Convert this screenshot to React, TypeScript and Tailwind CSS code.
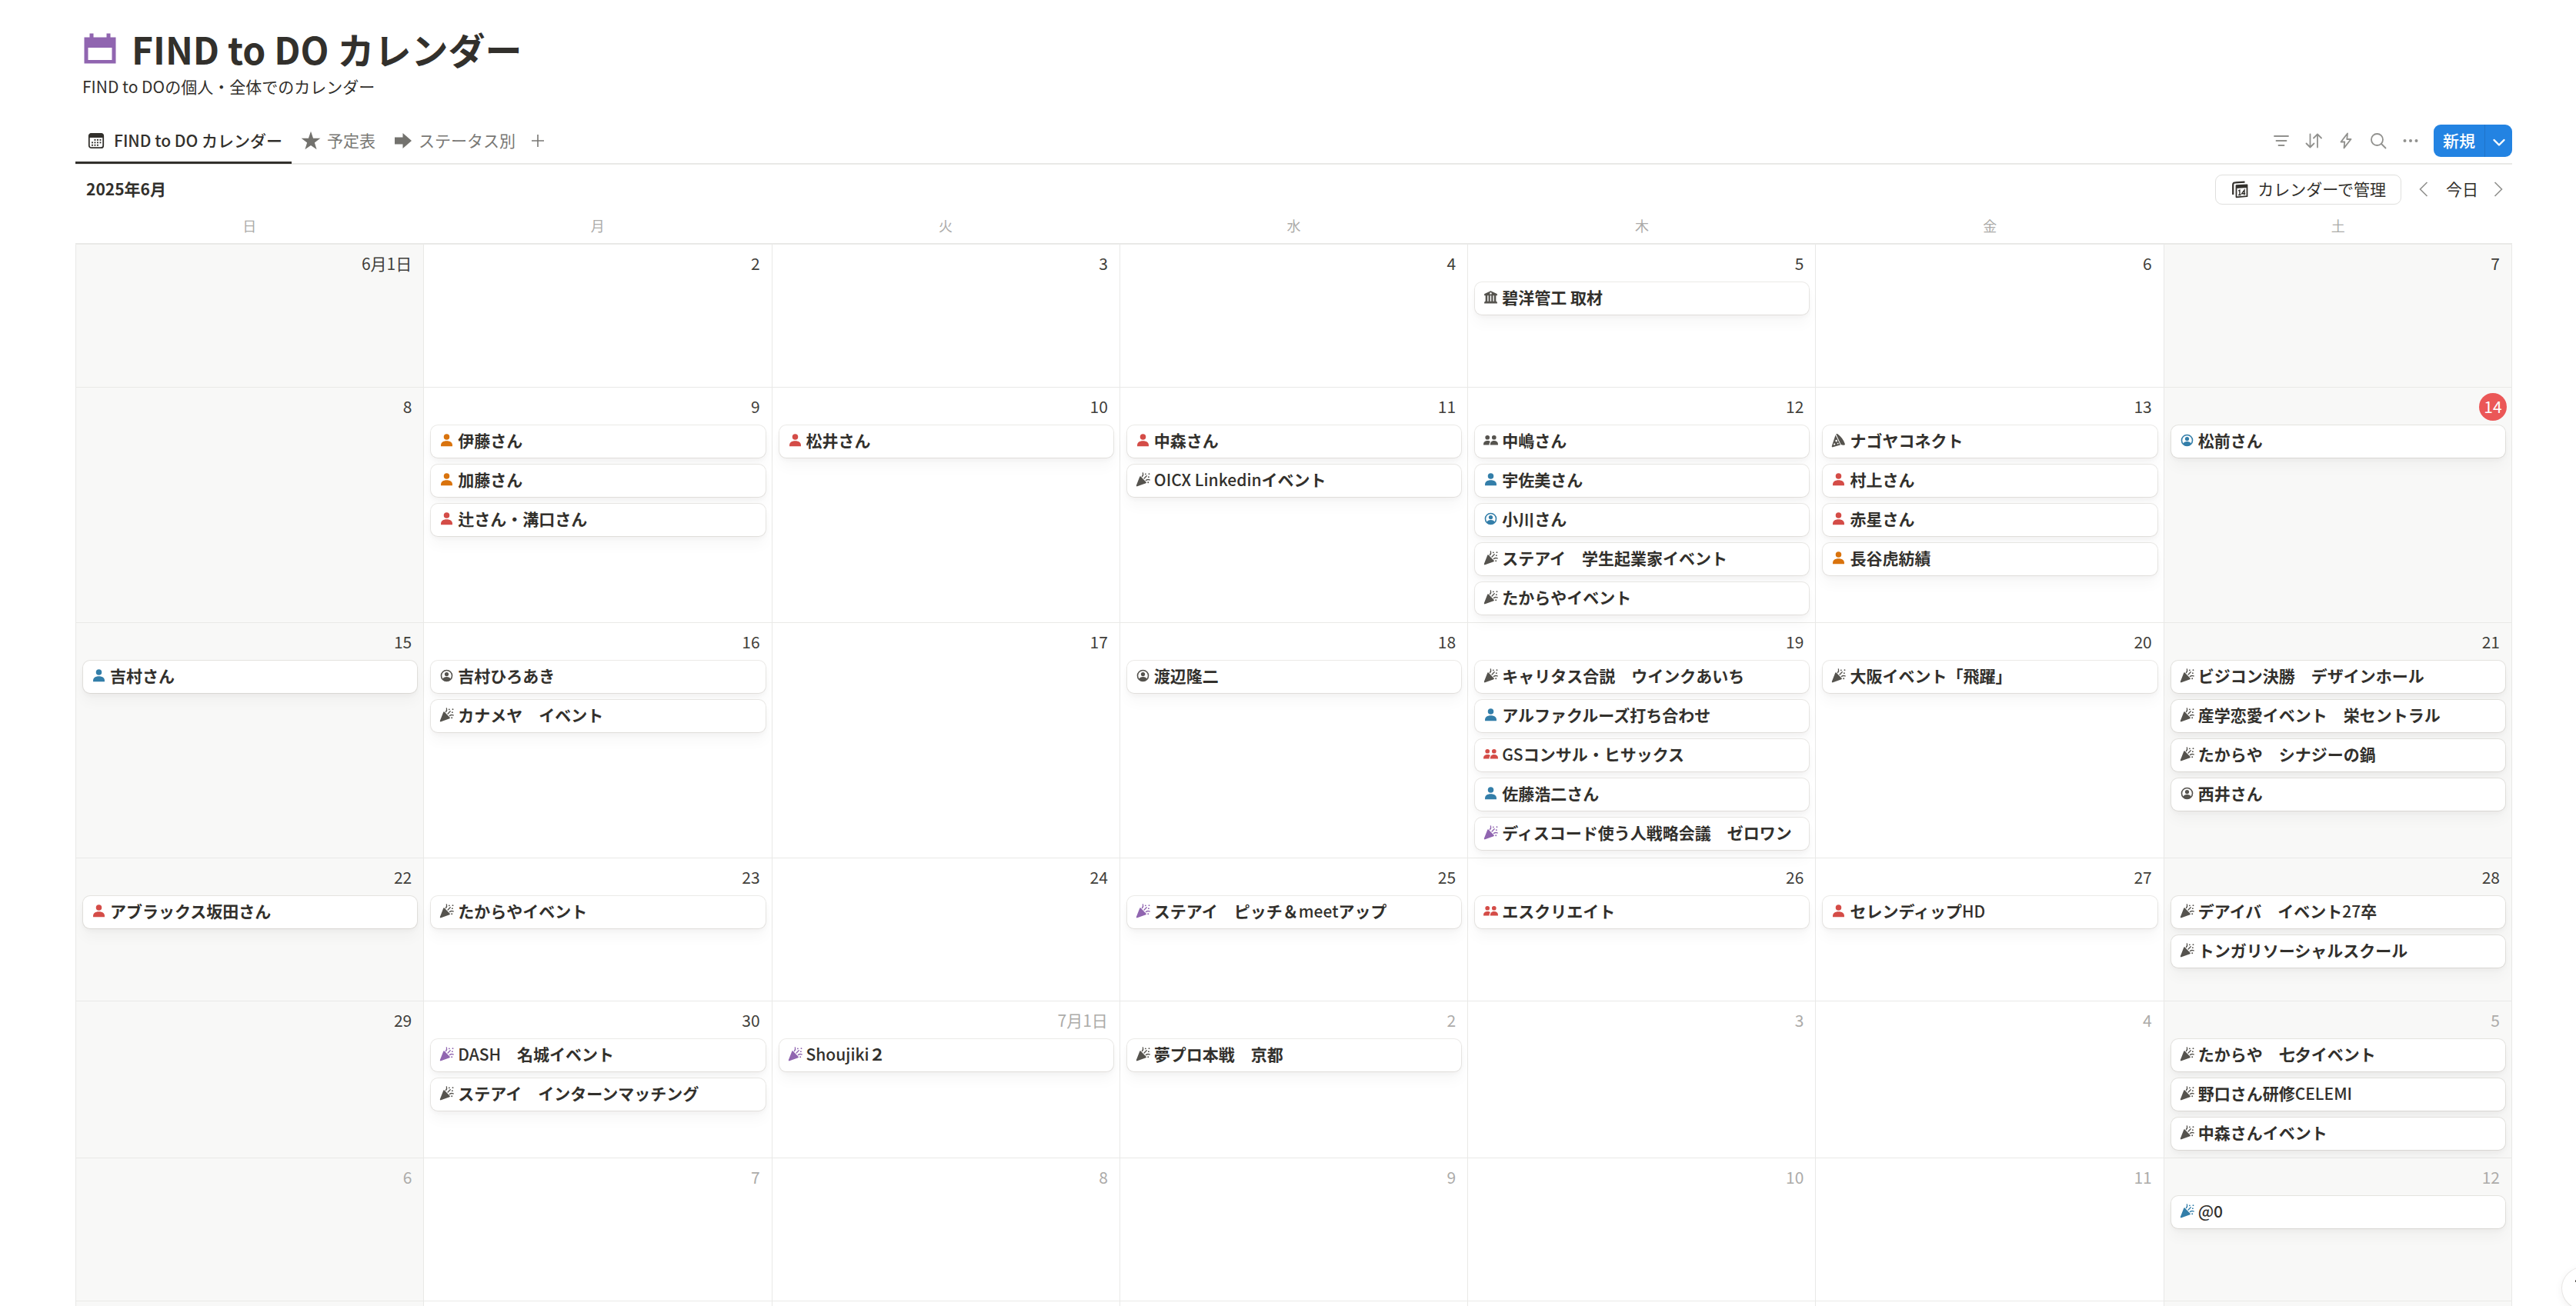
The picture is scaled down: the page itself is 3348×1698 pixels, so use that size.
import React from "react";

type IconName = "person" | "people" | "circle" | "party" | "bank" | "pizza";
type Tone = "gray" | "red" | "blue" | "orange" | "purple";
type Ev = [IconName, Tone, string];
type Day = { label: string; muted?: boolean; today?: boolean; events?: Ev[] };

const toneClass: Record<Tone, string> = {
  gray: "text-[#55534e]",
  red: "text-[#d44c47]",
  blue: "text-[#337ea9]",
  orange: "text-[#d9730d]",
  purple: "text-[#9065b0]",
};

const weekdays = ["日", "月", "火", "水", "木", "金", "土"];

const weeks: Day[][] = [
  [
    { label: "6月1日" },
    { label: "2" },
    { label: "3" },
    { label: "4" },
    { label: "5", events: [["bank", "gray", "碧洋管工 取材"]] },
    { label: "6" },
    { label: "7" },
  ],
  [
    { label: "8" },
    { label: "9", events: [["person", "orange", "伊藤さん"], ["person", "orange", "加藤さん"], ["person", "red", "辻さん・溝口さん"]] },
    { label: "10", events: [["person", "red", "松井さん"]] },
    { label: "11", events: [["person", "red", "中森さん"], ["party", "gray", "OICX Linkedinイベント"]] },
    {
      label: "12",
      events: [
        ["people", "gray", "中嶋さん"],
        ["person", "blue", "宇佐美さん"],
        ["circle", "blue", "小川さん"],
        ["party", "gray", "ステアイ　学生起業家イベント"],
        ["party", "gray", "たからやイベント"],
      ],
    },
    {
      label: "13",
      events: [
        ["pizza", "gray", "ナゴヤコネクト"],
        ["person", "red", "村上さん"],
        ["person", "red", "赤星さん"],
        ["person", "orange", "長谷虎紡績"],
      ],
    },
    { label: "14", today: true, events: [["circle", "blue", "松前さん"]] },
  ],
  [
    { label: "15", events: [["person", "blue", "吉村さん"]] },
    { label: "16", events: [["circle", "gray", "吉村ひろあき"], ["party", "gray", "カナメヤ　イベント"]] },
    { label: "17" },
    { label: "18", events: [["circle", "gray", "渡辺隆二"]] },
    {
      label: "19",
      events: [
        ["party", "gray", "キャリタス合説　ウインクあいち"],
        ["person", "blue", "アルファクルーズ打ち合わせ"],
        ["people", "red", "GSコンサル・ヒサックス"],
        ["person", "blue", "佐藤浩二さん"],
        ["party", "purple", "ディスコード使う人戦略会議　ゼロワン"],
      ],
    },
    { label: "20", events: [["party", "gray", "大阪イベント「飛躍」"]] },
    {
      label: "21",
      events: [
        ["party", "gray", "ビジコン決勝　デザインホール"],
        ["party", "gray", "産学恋愛イベント　栄セントラル"],
        ["party", "gray", "たからや　シナジーの鍋"],
        ["circle", "gray", "西井さん"],
      ],
    },
  ],
  [
    { label: "22", events: [["person", "red", "アブラックス坂田さん"]] },
    { label: "23", events: [["party", "gray", "たからやイベント"]] },
    { label: "24" },
    { label: "25", events: [["party", "purple", "ステアイ　ピッチ＆meetアップ"]] },
    { label: "26", events: [["people", "red", "エスクリエイト"]] },
    { label: "27", events: [["person", "red", "セレンディップHD"]] },
    { label: "28", events: [["party", "gray", "デアイバ　イベント27卒"], ["party", "gray", "トンガリソーシャルスクール"]] },
  ],
  [
    { label: "29" },
    { label: "30", events: [["party", "purple", "DASH　名城イベント"], ["party", "gray", "ステアイ　インターンマッチング"]] },
    { label: "7月1日", muted: true, events: [["party", "purple", "Shoujiki２"]] },
    { label: "2", muted: true, events: [["party", "gray", "夢プロ本戦　京都"]] },
    { label: "3", muted: true },
    { label: "4", muted: true },
    {
      label: "5",
      muted: true,
      events: [
        ["party", "gray", "たからや　七夕イベント"],
        ["party", "gray", "野口さん研修CELEMI"],
        ["party", "gray", "中森さんイベント"],
      ],
    },
  ],
  [
    { label: "6", muted: true },
    { label: "7", muted: true },
    { label: "8", muted: true },
    { label: "9", muted: true },
    { label: "10", muted: true },
    { label: "11", muted: true },
    { label: "12", muted: true, events: [["party", "blue", "@0"]] },
  ],
];

function EventIcon({ name, tone }: { name: IconName; tone: Tone }) {
  return (
    <svg viewBox="0 0 20 20" className={"size-[21px] shrink-0 " + toneClass[tone]} fill="currentColor" aria-hidden="true">
      {name === "person" && (
        <>
          <circle cx="10" cy="5.7" r="3.6" />
          <path d="M2.900 17.400v-1.500c0-3.200 2.700-5.200 7.100-5.200s7.100 2 7.100 5.200v1.500z" />
        </>
      )}
      {name === "people" && (
        <>
          <circle cx="5.9" cy="6.4" r="2.7" />
          <circle cx="14.1" cy="6.4" r="2.7" />
          <path d="M1 15.8v-1.2c0-2.6 1.9-4.2 4.9-4.2 1.6 0 2.8.4 3.6 1.2-.9 1-1.4 2.2-1.4 4.2z" />
          <path d="M9.3 15.8c0-3.4 1.6-5.4 4.8-5.4 3 0 4.9 1.6 4.9 4.2v1.2z" />
        </>
      )}
      {name === "circle" && (
        <>
          <circle cx="10" cy="10" r="6.700" fill="none" stroke="currentColor" strokeWidth="1.500" />
          <circle cx="10" cy="8.200" r="2.500" />
          <path d="M4.800 14.500c.9-2 2.800-3 5.200-3s4.300 1 5.200 3c-1.300 1.500-3.100 2.400-5.200 2.400s-3.900-.9-5.200-2.400z" />
        </>
      )}
      {name === "party" && (
        <>
          <path d="M5.900 6.600c.2-.6.9-.7 1.300-.3l6.700 6.800c.5.500.3 1.100-.3 1.400L3 18.400c-.8.300-1.500-.4-1.200-1.200z" />
          <g fill="none" stroke="currentColor" strokeWidth="1.300" strokeLinecap="round">
            <path d="M9 6.200c1.200-1.200 1.500-2.600.9-4.400" />
            <path d="M11.500 8.500l3-3" />
            <path d="M13.700 11c1.400-1.100 2.900-1.300 4.500-.6" />
          </g>
          <circle cx="13.200" cy="3.200" r=".9" />
          <circle cx="17.600" cy="3" r=".9" />
          <circle cx="17" cy="6.800" r=".9" />
          <circle cx="16.400" cy="13.600" r=".9" />
        </>
      )}
      {name === "bank" && (
        <>
          <path fillRule="evenodd" d="M10 2.200l7.600 3.500c.3.200.4.400.4.700v.9c0 .4-.2.600-.6.600H2.600c-.4 0-.6-.2-.6-.6v-.9c0-.3.100-.5.400-.7zM10 4a1.200 1.200 0 100 2.400A1.200 1.200 0 0010 4z" />
          <path d="M3.500 7.500h2.400v7.500H3.500zM7.200 7.500h2.100v7.500H7.200zM10.700 7.500h2.100v7.500h-2.100zM14.100 7.500h2.400v7.500h-2.400zM2.800 14.900h14.400v.9H18v1.900H2v-1.900h.8z" />
        </>
      )}
      {name === "pizza" && (
        <path
          fillRule="evenodd"
          d="M7 2.400c.6-.7 1.500-.6 2.200 0 4.300 3.300 7.200 7.300 8.700 12 .3.900-.2 1.500-1 1.500-1.600.100-3-.1-3.900-.6zM6.300 3.400l6 12.400-9.300 2.600c-.9.300-1.500-.3-1.300-1.200zM7.300 9.400a1.200 1.200 0 100 2.400 1.200 1.200 0 000-2.400zM4.900 13.700a1.100 1.100 0 100 2.200 1.100 1.100 0 000-2.200zM9.200 13a.9.9 0 100 1.800.9.9 0 000-1.800z"
        />
      )}
    </svg>
  );
}

function TitleIcon() {
  return (
    <svg viewBox="0 0 42 42" className="size-[42px] shrink-0" fill="#9065b0" aria-hidden="true">
      <path fillRule="evenodd" d="M7.500 1.500h5v5h17v-5h5v5h7v34H.5v-34h7zM5.500 20v16h31V20z" />
    </svg>
  );
}

function CalendarTabIcon() {
  return (
    <svg viewBox="0 0 22 22" className="size-[22px] shrink-0" aria-hidden="true">
      <rect x="1.800" y="1.800" width="18.400" height="18.400" rx="3" fill="none" stroke="#32302c" strokeWidth="1.800" />
      <path d="M1.500 7V4.500c0-2 1.200-3.300 3.300-3.300h12.400c2.100 0 3.300 1.300 3.300 3.300V7z" fill="#32302c" />
      <g fill="#32302c">
        <rect x="8.500" y="9" width="1.900" height="1.900" />
        <rect x="12" y="9" width="1.900" height="1.900" />
        <rect x="15.500" y="9" width="1.900" height="1.900" />
        <rect x="5" y="12.400" width="1.900" height="1.900" />
        <rect x="8.500" y="12.400" width="1.900" height="1.900" />
        <rect x="12" y="12.400" width="1.900" height="1.900" />
        <rect x="15.500" y="12.400" width="1.900" height="1.900" />
        <rect x="5" y="15.800" width="1.900" height="1.900" />
        <rect x="8.500" y="15.800" width="1.900" height="1.900" />
        <rect x="12" y="15.800" width="1.900" height="1.900" />
      </g>
    </svg>
  );
}

function ManageIcon() {
  return (
    <svg viewBox="0 0 24 24" className="size-6 shrink-0" fill="none" aria-hidden="true">
      <path d="M3.200 19V6.500c0-2.200 1-3.200 3.200-3.200L18.500 2.600" stroke="#32302c" strokeWidth="2.200" />
      <path d="M7.500 7.200L21.500 6.300V21.200L7.500 22.300z" stroke="#32302c" strokeWidth="1.800" strokeLinejoin="round" />
      <path d="M7 7.200L22 6.200V10L7 11z" fill="#32302c" />
      <path d="M10.300 14.200l1.600-1v6.300M10.100 19.500h3.500M18 19.500v-6.300l-3.400 4.500h4.600" stroke="#32302c" strokeWidth="1.400" />
    </svg>
  );
}

function ToolButton({ label, children }: { label: string; children: React.ReactNode }) {
  return (
    <button aria-label={label} className="flex size-[42px] items-center justify-center text-[#91918e]">
      <svg viewBox="0 0 24 24" className="size-6" fill="none" stroke="currentColor" strokeWidth="1.800" strokeLinecap="round" strokeLinejoin="round" aria-hidden="true">
        {children}
      </svg>
    </button>
  );
}

// Latin runs are set one weight lighter than the Japanese around them.
function MixedText({ text }: { text: string }) {
  return (
    <>
      {text.split(/([!-~]+(?: [!-~]+)*)/).map((part, i) =>
        i % 2 ? (
          <span key={i} className="font-medium">
            {part}
          </span>
        ) : (
          part
        ),
      )}
    </>
  );
}

function DayCell({ day, weekend }: { day: Day; weekend: boolean }) {
  return (
    <div
      role="gridcell"
      className={"min-h-[186px] min-w-0 border-r border-b border-[#e9e9e7] pb-[10px] " + (weekend ? "bg-[#f8f8f7]" : "")}
    >
      <div className="flex h-[49px] items-center justify-end text-[21px]">
        {day.today ? (
          <span className="mr-[6px] flex size-9 items-center justify-center rounded-full bg-[#eb5757] text-white">{day.label}</span>
        ) : (
          <span className={"mr-[15px] " + (day.muted ? "text-[#acaba9]" : "text-[#3f3e3a]")}>{day.label}</span>
        )}
      </div>
      <ul className="flex flex-col gap-[9px] pr-2 pl-[9px]">
        {day.events?.map(([icon, tone, text]) => (
          <li key={text}>
            <a
              href="#"
              className="flex h-[42px] items-center gap-1 rounded-[9px] bg-white px-[10px] pb-1 shadow-[0_0_0_1px_rgba(42,28,0,0.09),0_3px_6px_rgba(42,28,0,0.04),0_12px_18px_rgba(42,28,0,0.03)]"
            >
              <EventIcon name={icon} tone={tone} />
              <span className="truncate text-[21px] leading-7 font-bold text-[#32302c]">
                <MixedText text={text} />
              </span>
            </a>
          </li>
        ))}
      </ul>
    </div>
  );
}

export default function App() {
  return (
    <div className="relative h-screen overflow-hidden bg-white pt-[30px] pr-[83px] pl-[98px] font-['Noto_Sans_CJK_JP','Noto_Sans',sans-serif] text-[21px] text-[#32302c]">
      <header className="pl-[9px]">
        <div className="flex h-[66px] items-center gap-[20px] pl-[2px]">
          <TitleIcon />
          <h1 className="text-[48px] leading-[66px] font-bold">FIND to DO カレンダー</h1>
        </div>
        <p className="leading-8">FIND to DOの個人・全体でのカレンダー</p>
      </header>

      <div className="mt-7 flex h-[58px] items-start justify-between border-b-2 border-[#e9e9e7]">
        <nav className="flex h-[57px]">
          <a href="#" aria-current="page" className="flex items-start border-b-[3px] border-[#32302c] pr-3 pl-4 font-medium">
            <span className="flex h-[54px] items-center gap-3">
              <CalendarTabIcon />
              FIND to DO カレンダー
            </span>
          </a>
          <a href="#" className="flex h-[54px] items-center gap-2 px-3 text-[#787774]">
            <svg viewBox="0 0 24 24" className="size-[26px]" fill="#73726e" aria-hidden="true">
              <path d="M12 .8l2.800 8.100 8.600.2-6.900 5.100 2.500 8.200-7-4.900-7 4.900 2.500-8.200L.6 9.100l8.600-.2z" />
            </svg>
            予定表
          </a>
          <a href="#" className="flex h-[54px] items-center gap-2 px-3 text-[#787774]">
            <svg viewBox="0 0 24 24" className="size-6" fill="#73726e" aria-hidden="true">
              <path d="M1 7.500h10.500V2L23 12 11.500 22v-5.500H1z" />
            </svg>
            ステータス別
          </a>
          <button aria-label="ビューを追加" className="flex h-[54px] w-[34px] items-center justify-center text-[#787774]">
            <svg viewBox="0 0 18 18" className="size-[18px]" stroke="currentColor" strokeWidth="1.600" aria-hidden="true">
              <path d="M9 1v16M1 9h16" />
            </svg>
          </button>
        </nav>
        <div className="flex h-[54px] items-center">
          <ToolButton label="フィルター">
            <path d="M3 6h18M5.500 12h13M8.500 18h7" />
          </ToolButton>
          <ToolButton label="並べ替え">
            <path d="M7.500 3.500v16.500M2.500 15.500L7.500 20.500l5-5M17 20.500V4M12 8.500L17 3.500l5 5" />
          </ToolButton>
          <ToolButton label="オートメーション">
            <path d="M14 2.500L5.500 13.500h4.800L9.500 21.500l9-11.500h-5.200z" />
          </ToolButton>
          <ToolButton label="検索">
            <circle cx="10.500" cy="10.500" r="7.500" />
            <path d="M16 16L21.500 21.500" />
          </ToolButton>
          <ToolButton label="その他">
            <g fill="currentColor" stroke="none">
              <circle cx="4.500" cy="12" r="2" />
              <circle cx="12" cy="12" r="2" />
              <circle cx="19.500" cy="12" r="2" />
            </g>
          </ToolButton>
          <div className="ml-[9px] flex h-[42px] overflow-hidden rounded-[9px] bg-[#2383e2] font-medium text-white">
            <button className="w-[67px] border-r border-[#1f74c9]">新規</button>
            <button aria-label="新規メニュー" className="flex w-[35px] items-center justify-center">
              <svg viewBox="0 0 18 18" className="size-[18px]" fill="none" stroke="currentColor" strokeWidth="2.400" strokeLinecap="round" strokeLinejoin="round" aria-hidden="true">
                <path d="M2.500 8L9 14.500 15.500 8" />
              </svg>
            </button>
          </div>
        </div>
      </div>

      <main>
        <div className="flex h-16 items-center justify-between pl-[14px]">
          <h2 className="font-bold">2025年6月</h2>
          <div className="flex items-center">
            <button className="flex h-[39px] items-center gap-[11px] rounded-[9px] border border-[#dfdfdd] px-[19px]">
              <ManageIcon />
              カレンダーで管理
            </button>
            <button aria-label="前の月" className="ml-2 flex size-[42px] items-center justify-center text-[#91918e]">
              <svg viewBox="0 0 20 20" className="size-5" fill="none" stroke="currentColor" strokeWidth="1.600" aria-hidden="true">
                <path d="M14.500 1L5.500 10l9 9" />
              </svg>
            </button>
            <button className="w-[58px]">今日</button>
            <button aria-label="次の月" className="flex h-[42px] w-9 items-center justify-center text-[#91918e]">
              <svg viewBox="0 0 20 20" className="size-5" fill="none" stroke="currentColor" strokeWidth="1.600" aria-hidden="true">
                <path d="M5.500 1l9 9-9 9" />
              </svg>
            </button>
          </div>
        </div>

        <div role="grid" aria-label="2025年6月">
          <div role="row" className="grid h-10 grid-cols-7 border-b-2 border-[#e9e9e7] text-center text-lg leading-[30px] text-[#acaba9]">
            {weekdays.map((d) => (
              <span role="columnheader" key={d}>
                {d}
              </span>
            ))}
          </div>
          <div className="border-l border-[#e9e9e7]">
            {weeks.map((week, w) => (
              <div role="row" key={w} className="grid grid-cols-7">
                {week.map((day, i) => (
                  <DayCell key={i} day={day} weekend={i === 0 || i === 6} />
                ))}
              </div>
            ))}
            <div aria-hidden="true" className="grid h-12 grid-cols-7">
              {weekdays.map((d, i) => (
                <div key={d} className={"border-r border-[#e9e9e7] " + (i === 0 || i === 6 ? "bg-[#f8f8f7]" : "")} />
              ))}
            </div>
          </div>
        </div>
      </main>

      <button
        aria-label="ヘルプ"
        className="absolute -right-9 -bottom-1 flex size-[54px] items-center justify-center rounded-full bg-white shadow-[0_0_0_1px_rgba(42,28,0,0.08),0_3px_12px_rgba(42,28,0,0.07)]"
      >
        <svg viewBox="0 0 24 24" className="size-6" fill="#32302c" aria-hidden="true">
          <path d="M2 1.500h9v2.200H2z" />
        </svg>
      </button>
    </div>
  );
}
